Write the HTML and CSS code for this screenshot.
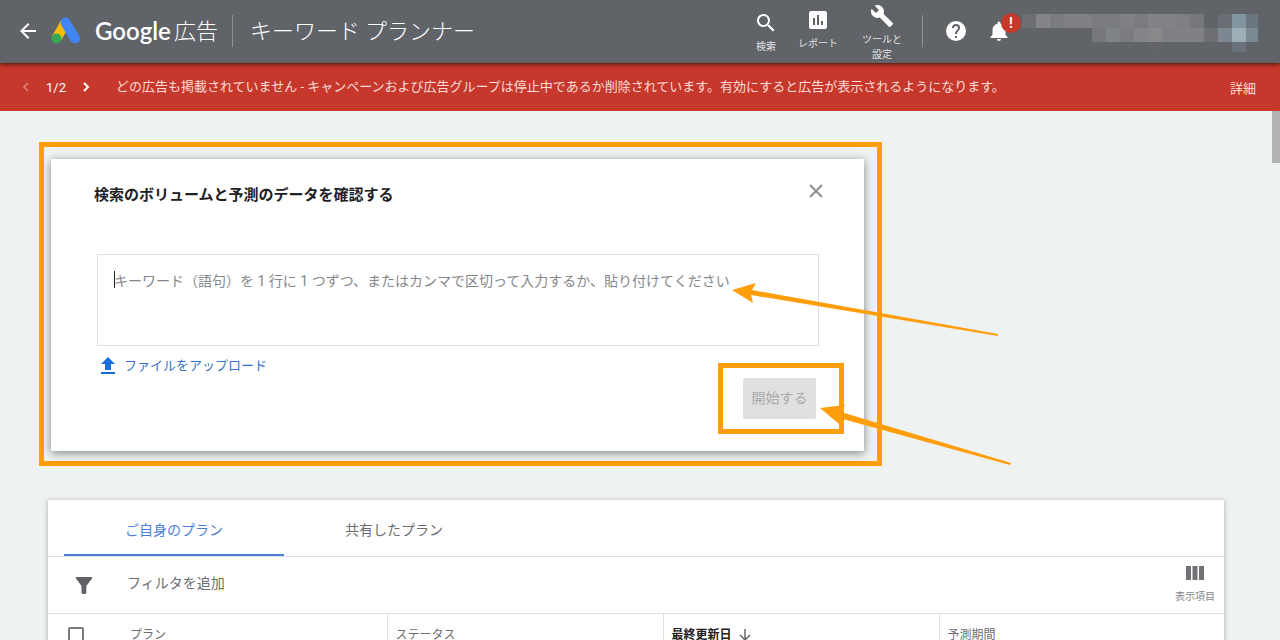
FILE: index.html
```
<!DOCTYPE html>
<html lang="ja">
<head>
<meta charset="utf-8">
<meta name="viewport" content="width=device-width, initial-scale=1">
<title>キーワード プランナー - Google 広告</title>
<link rel="stylesheet" href="styles.css">
</head>
<body>
<header class="topbar">
  <button class="icon-button back" type="button" aria-label="戻る">
    <svg width="24" height="24" viewBox="0 0 24 24"><path fill="#fff" d="M20 11H7.800l5.600-5.600L12 4l-8 8 8 8 1.400-1.400L7.800 13H20z"/></svg>
  </button>
  <svg class="logo" width="30" height="28" viewBox="0 0 30 28" aria-hidden="true">
    <path d="M14.500 5.500L5.500 21.500" stroke="#fbbc04" stroke-width="10"/>
    <path d="M14.500 5.500L24 21.500" stroke="#4285f4" stroke-width="10" stroke-linecap="round"/>
    <circle cx="5.500" cy="21.500" r="5" fill="#34a853"/>
  </svg>
  <div class="brand"><span class="brand-name">Google</span><span class="brand-product">広告</span></div>
  <h1 class="page-title">キーワード プランナー</h1>
  <nav class="tools">
    <button class="tool" type="button">
      <svg width="24" height="24" viewBox="0 0 24 24"><path fill="#fff" d="M15.500 14h-.8l-.3-.3A6.500 6.500 0 1 0 13.700 14.400l.3.3v.8l5 5 1.500-1.500zM9.500 14a4.500 4.500 0 1 1 0-9 4.500 4.500 0 0 1 0 9z"/></svg>
      <span>検索</span>
    </button>
    <button class="tool report" type="button">
      <svg width="24" height="24" viewBox="0 0 24 24"><path fill="#fff" fill-rule="evenodd" d="M19 3H5a2 2 0 0 0-2 2v14c0 1.100.9 2 2 2h14a2 2 0 0 0 2-2V5a2 2 0 0 0-2-2zM9 17H7v-7h2zm4 0h-2V7h2zm4 0h-2v-4h2z"/></svg>
      <span>レポート</span>
    </button>
    <button class="tool settings" type="button">
      <svg width="24" height="24" viewBox="0 0 24 24"><path fill="#fff" d="M22.700 19l-9.100-9.100c.9-2.300.4-5-1.500-6.900-2-2-5-2.400-7.400-1.300L9 6 6 9 1.600 4.700C.4 7.100.9 10.100 2.900 12.100c1.900 1.900 4.600 2.400 6.900 1.500l9.100 9.100c.4.400 1 .4 1.400 0l2.300-2.300c.5-.4.5-1.100.1-1.400z"/></svg>
      <span>ツールと<br>設定</span>
    </button>
  </nav>
  <button class="icon-button help" type="button" aria-label="ヘルプ">
    <svg width="24" height="24" viewBox="0 0 24 24"><path fill="#fff" d="M12 2a10 10 0 1 0 0 20 10 10 0 0 0 0-20zm1 17h-2v-2h2zm2.070-7.750l-.9.920C13.450 12.900 13 13.500 13 15h-2v-.5c0-1.100.45-2.100 1.170-2.830l1.240-1.260c.37-.36.59-.86.59-1.410a2 2 0 1 0-4 0H8a4 4 0 1 1 8 0c0 .88-.36 1.680-.93 2.250z"/></svg>
  </button>
  <button class="icon-button bell" type="button" aria-label="通知">
    <svg width="24" height="24" viewBox="0 0 24 24"><path fill="#fff" d="M12 22c1.100 0 2-.9 2-2h-4c0 1.100.9 2 2 2zm6.500-6v-5c0-3.100-1.900-5.600-5-6.300V4a1.500 1.500 0 0 0-3 0v.7c-3.100.7-5 3.200-5 6.300v5l-2 2v1h17v-1z"/></svg>
    <span class="badge">!</span>
  </button>
  <svg class="account" width="238" height="38" viewBox="0 0 238 38" shape-rendering="crispEdges" aria-hidden="true">
    <path fill="#6d6e72" d="M2 0h14v14H2z"/>
    <path fill="#858589" d="M16 0h14v14H16z"/><path fill="#7b7c80" d="M30 0h14v14H30z"/><path fill="#808084" d="M44 0h28v14H44z"/>
    <path fill="#797b7f" d="M72 0h28v14H72z"/><path fill="#808185" d="M100 0h14v14h-14z"/><path fill="#7a7b7f" d="M114 0h14v14h-14z"/><path fill="#838387" d="M128 0h28v14h-28z"/><path fill="#7e7f82" d="M156 0h14v14h-14z"/><path fill="#77787b" d="M170 0h14v14h-14z"/>
    <path fill="#686e74" d="M198 0h14v14h-14z"/><path fill="#8095a0" d="M212 0h14v14h-14z"/><path fill="#6b777e" d="M226 0h12v14h-12z"/>
    <path fill="#76777b" d="M72 14h14v14H72z"/><path fill="#7f8387" d="M86 14h14v14H86z"/><path fill="#7a7c80" d="M100 14h14v14h-14z"/><path fill="#858589" d="M114 14h14v14h-14z"/><path fill="#89888b" d="M128 14h14v14h-14z"/><path fill="#808185" d="M142 14h42v14h-42z"/><path fill="#6e6f73" d="M184 14h14v14h-14z"/><path fill="#7b8891" d="M198 14h14v14h-14z"/><path fill="#9caeb6" d="M212 14h14v14h-14z"/><path fill="#7b8992" d="M226 14h12v14h-12z"/>
    <path fill="#636468" d="M128 28h14v10h-14z"/><path fill="#69727b" d="M212 28h14v10h-14z"/>
  </svg>
</header>

<section class="alert">
  <button class="icon-button step previous" type="button" aria-label="前へ" disabled>
    <svg width="8" height="10" viewBox="0 0 8 10"><path d="M6 1L2 5l4 4" fill="none" stroke="#fff" stroke-width="1.500"/></svg>
  </button>
  <span class="alert-count">1/2</span>
  <button class="icon-button step" type="button" aria-label="次へ">
    <svg width="8" height="10" viewBox="0 0 8 10"><path d="M2 1l4 4-4 4" fill="none" stroke="#fff" stroke-width="2"/></svg>
  </button>
  <p class="alert-text">どの広告も掲載されていません - キャンペーンおよび広告グループは停止中であるか削除されています。有効にすると広告が表示されるようになります。</p>
  <a class="alert-link" href="#">詳細</a>
</section>

<main class="content">
  <span class="scroll-thumb"></span>
  <div class="highlight">
    <form class="dialog">
      <div class="dialog-head">
        <h2><label for="keywords">検索のボリュームと予測のデータを確認する</label></h2>
        <button class="icon-button" type="button" aria-label="閉じる">
          <svg width="16" height="16" viewBox="0 0 16 16"><path d="M2 2l12 12M14 2L2 14" stroke="#8b8f93" stroke-width="2"/></svg>
        </button>
      </div>
      <div class="field">
        <textarea id="keywords" placeholder="キーワード（語句）を 1 行に 1 つずつ、またはカンマで区切って入力するか、貼り付けてください"></textarea>
        <span class="caret"></span>
      </div>
      <div class="dialog-foot">
        <button class="upload" type="button">
          <svg width="16" height="18" viewBox="0 0 16 18"><path fill="#1a6fdc" d="M8 0l7 7h-4v6H5V7H1zM1 15h14v2H1z"/></svg>
          <span>ファイルをアップロード</span>
        </button>
        <div class="submit-highlight"><button class="submit" type="submit" disabled>開始する</button></div>
      </div>
    </form>
  </div>
  <svg class="arrows" width="300" height="190" viewBox="0 0 300 190" aria-hidden="true">
    <g fill="#ff9d0a">
      <path d="M12 10L36 3l-4 7 246 44v2L31 15l2 8z"/>
      <path d="M100 128l25-3-4 7 170 51-1 2-171-47 0 6z"/>
    </g>
  </svg>

  <section class="plans">
    <div class="tabs" role="tablist">
      <button class="tab active" type="button" role="tab" aria-selected="true">ご自身のプラン</button>
      <button class="tab" type="button" role="tab" aria-selected="false">共有したプラン</button>
    </div>
    <div class="filter-row">
      <svg width="16" height="17" viewBox="0 0 16 17" aria-hidden="true"><path fill="#5f6164" d="M0 0h16v1.500L10.300 9v7l-1 1H6.500l-1-1V9L0 1.500z"/></svg>
      <button class="add-filter" type="button">フィルタを追加</button>
      <button class="columns" type="button">
        <svg width="18" height="14" viewBox="0 0 18 14"><path fill="#707275" d="M0 0h5v14H0zM6.500 0h5v14h-5zM13 0h5v14h-5z"/></svg>
        <span>表示項目</span>
      </button>
    </div>
    <table class="plan-table">
      <thead>
        <tr>
          <th class="plan-column" scope="col"><div class="plan-cell"><input type="checkbox" aria-label="すべて選択"><span>プラン</span></div></th>
          <th class="data-column" scope="col">ステータス</th>
          <th class="data-column sorted" scope="col" aria-sort="descending"><div class="sort-cell"><span>最終更新日</span><svg width="12" height="12" viewBox="0 0 12 12"><path d="M6 0v11M1 6l5 5 5-5" fill="none" stroke="#66686b" stroke-width="1.500"/></svg></div></th>
          <th scope="col">予測期間</th>
        </tr>
      </thead>
    </table>
  </section>
</main>
</body>
</html>
```
FILE: styles.css
```
* { box-sizing: border-box; }

body {
  margin: 0;
  height: 100vh;
  overflow: hidden;
  background: #eef2f3;
  color: #6c6e71;
  font-family: Roboto, "Noto Sans CJK JP", sans-serif;
  font-size: 14px;
  line-height: 20px;
}

h1, h2, p { margin: 0; font-weight: 400; }
svg { display: block; flex: none; }

button {
  margin: 0;
  padding: 0;
  border: 0;
  background: none;
  color: inherit;
  font: inherit;
  white-space: nowrap;
}

.icon-button { display: flex; flex: none; position: relative; }

.topbar {
  position: relative;
  z-index: 2;
  display: flex;
  align-items: center;
  height: 63px;
  padding: 0 22px 2px 16px;
  background: #606368;
  color: #fff;
  box-shadow: 0 1px 4px rgba(0, 0, 0, 0.7);
  white-space: nowrap;
}

.logo { margin-left: 11px; }

.brand {
  display: flex;
  align-items: center;
  gap: 4px;
  margin-left: 14px;
  height: 32px;
  padding-right: 14px;
  border-right: 1px solid #8d9094;
}

.brand-name {
  width: 75px;
  font-family: Lato, sans-serif;
  font-size: 24px;
  font-weight: 600;
  line-height: 32px;
}

.brand-product, .page-title {
  padding-bottom: 4px;
  font-family: "Noto Sans CJK JP", sans-serif;
  font-size: 22px;
  font-weight: 300;
  line-height: 32px;
}

.page-title { margin-left: 17px; }

.tools {
  display: flex;
  align-items: stretch;
  align-self: flex-start;
  margin-left: auto;
  padding-right: 20px;
}

.tool {
  display: flex;
  flex-direction: column;
  align-items: center;
  gap: 4px;
  width: 40px;
  padding-top: 11px;
  color: #e3e4e5;
  font-size: 10px;
  line-height: 15px;
}

.report { margin-left: 12px; padding-top: 8px; }
.settings { margin-left: 24px; padding-top: 4px; }
.help { align-items: center; height: 32px; padding-left: 21px; border-left: 1px solid #8d9094; }
.bell { margin-left: 19px; }

.badge {
  position: absolute;
  top: -6px;
  left: 14px;
  width: 20px;
  height: 20px;
  border-radius: 50%;
  background: #c5392b;
  font-size: 14px;
  font-weight: 700;
  line-height: 20px;
  text-align: center;
}

.account { margin: 4px 0 0 9px; }

.alert {
  display: flex;
  align-items: center;
  height: 48px;
  padding: 0 24px 0 20px;
  background: #c5382b;
  color: #fbdcd8;
  font-size: 13px;
}

.step { width: 12px; justify-content: center; }
.previous { opacity: 0.4; }
.alert-count { width: 48px; padding-top: 2px; text-align: center; color: #fff; }
.alert-text { flex: 1; margin-left: 24px; }
.alert-link { padding-top: 4px; color: inherit; text-decoration: none; }

.content { position: relative; padding: 31px 56px 0 39px; }

.scroll-thumb {
  position: absolute;
  top: 0;
  right: 0;
  width: 8px;
  height: 52px;
  background: #b1b3b5;
}

.highlight {
  max-width: 843px;
  padding: 12px 13px 10px 7px;
  border: 5px solid #ff9d0a;
}

.dialog {
  padding: 22px 20px 17px 43px;
  background: #fff;
  box-shadow: 0 2px 9px rgba(0, 0, 0, 0.45);
}

.dialog-head {
  display: flex;
  align-items: flex-start;
  justify-content: space-between;
  padding: 2px 20px 0 0;
}

.dialog-head h2 { color: #202124; font-size: 15px; font-weight: 700; line-height: 24px; }

.field { position: relative; margin: 47px 25px 0 3px; }

.field textarea {
  display: block;
  width: 100%;
  height: 92px;
  padding: 16px;
  border: 1px solid #dcdddf;
  background: #fff;
  color: #202124;
  font: inherit;
  resize: none;
}

.field textarea::placeholder { color: #85878a; opacity: 1; }

.caret {
  position: absolute;
  top: 17px;
  left: 17px;
  width: 1px;
  height: 17px;
  background: #202124;
}

.dialog-foot { display: flex; align-items: flex-start; justify-content: space-between; }

.upload {
  display: flex;
  align-items: center;
  gap: 8px;
  margin: 10px 0 0 6px;
  color: #3572cc;
  font-size: 13px;
}

.submit-highlight {
  margin-top: 17px;
  padding: 10px 23px 10px 20px;
  border: 5px solid #ff9d0a;
}

.submit {
  display: block;
  width: 73px;
  height: 41px;
  padding-bottom: 2px;
  border-radius: 2px;
  background: #e0e0e0;
  color: #a9aaab;
}

.arrows { position: absolute; z-index: 1; top: 169px; left: 720px; }

.plans {
  margin: 34px 0 0 9px;
  background: #fff;
  box-shadow: 0 1px 5px rgba(0, 0, 0, 0.3);
}

.tabs { display: flex; padding: 0 16px; border-bottom: 1px solid #dfe1e3; }

.tab {
  width: 220px;
  height: 56px;
  border-bottom: 2px solid transparent;
  border-top: 6px solid transparent;
}

.active { border-bottom-color: #4a7dd0; color: #4a80dc; }

.filter-row {
  display: flex;
  align-items: center;
  height: 57px;
  padding: 0 9px 0 28px;
  border-bottom: 1px solid #dfe1e3;
}

.add-filter { margin: 0 auto 4px 35px; }

.columns {
  display: flex;
  flex-direction: column;
  align-items: center;
  gap: 10px;
  color: #85878a;
  font-size: 10px;
  line-height: 14px;
}

.plan-table { width: 100%; border-collapse: collapse; table-layout: fixed; }

.plan-table th {
  height: 40px;
  padding: 1px 8px 0;
  border-left: 1px solid #dfe1e3;
  font-size: 12px;
  font-weight: 400;
  text-align: left;
}

.plan-table .plan-column { width: 339px; padding-left: 20px; border-left: 0; }
.data-column { width: 276px; }
.plan-table .sorted { color: #202124; font-weight: 700; }

.plan-cell { display: flex; align-items: center; gap: 46px; }

.plan-cell input {
  appearance: none;
  width: 16px;
  height: 16px;
  margin: 0;
  border: 2px solid #77797c;
  border-radius: 2px;
}

.sort-cell { display: flex; align-items: center; gap: 7px; }
```
